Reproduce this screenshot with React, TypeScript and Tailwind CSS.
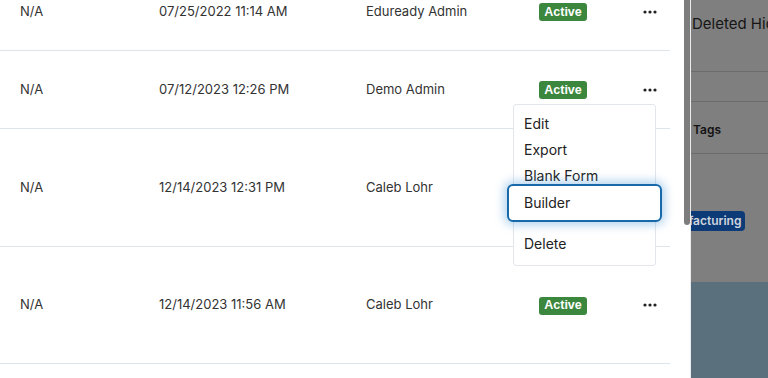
import type { ReactNode } from 'react';

interface Row {
  ref: string;
  date: string;
  owner: string;
  height: number;
}

const rows: Row[] = [
  { ref: 'N/A', date: '07/25/2022 11:14 AM', owner: 'Eduready Admin', height: 78 },
  { ref: 'N/A', date: '07/12/2023 12:26 PM', owner: 'Demo Admin', height: 78 },
  { ref: 'N/A', date: '12/14/2023 12:31 PM', owner: 'Caleb Lohr', height: 118 },
  { ref: 'N/A', date: '12/14/2023 11:56 AM', owner: 'Caleb Lohr', height: 117 },
];

const font = { fontFamily: 'Inter, "Noto Sans", sans-serif' };

function Dots() {
  return (
    <svg width="14" height="4" viewBox="0 0 14 4" className="text-[#222]">
      <circle cx="2" cy="2" r="1.6" fill="currentColor" />
      <circle cx="7" cy="2" r="1.6" fill="currentColor" />
      <circle cx="12" cy="2" r="1.6" fill="currentColor" />
    </svg>
  );
}

function MenuItem({ children }: { children: ReactNode }) {
  return <div className="flex h-[26px] items-center px-[10px] text-[14px] text-[#222]">{children}</div>;
}

function ActionsMenu() {
  return (
    <div className="absolute left-[-130px] top-[16px] z-10 w-[143px] rounded-[3px] border border-[#e3e6ea] bg-white pt-[6px] pb-[8px]">
      <MenuItem>Edit</MenuItem>
      <MenuItem>Export</MenuItem>
      <MenuItem>Blank Form</MenuItem>
      <div className="relative -mx-[7px] -mt-[5px] flex h-[38px] items-center rounded-[6px] border-2 border-[#1769aa] bg-white pl-[15px] text-[14px] text-[#222] shadow-[0_0_10px_3px_rgba(38,132,210,0.35)]">
        Builder
      </div>
      <div className="h-[9px]" />
      <MenuItem>Delete</MenuItem>
    </div>
  );
}

export default function App() {
  return (
    <div className="flex h-[378px] w-[768px] overflow-hidden bg-white" style={font}>
      <div className="w-[684px] shrink-0 overflow-hidden">
        <div className="-mt-[27px] w-[670px]">
          {rows.map((r, i) => (
            <div
              key={i}
              className="flex items-center border-b border-[#dde4ea] text-[13px] text-[#333]"
              style={{ height: r.height }}
            >
              <div className="w-[159px] pl-[20px]">{r.ref}</div>
              <div className="w-[207px]">{r.date}</div>
              <div className="w-[173px]">{r.owner}</div>
              <div className="w-[104px]">
                {i === 2 ? null : (
                  <span
                    className="inline-flex h-[18px] w-[48px] items-center justify-center rounded-[3px] bg-[#3b873e] text-[12.5px] font-bold text-white"
                    style={{ fontFamily: '"Liberation Sans", Arial, sans-serif' }}
                  >
                    Active
                  </span>
                )}
              </div>
              <div className="relative flex">
                <Dots />
                {i === 1 ? <ActionsMenu /> : null}
              </div>
            </div>
          ))}
        </div>
      </div>
      <div className="w-[6px] shrink-0">
        <div className="h-[225px] rounded-b-[3px] bg-[#7d7d7d]" />
      </div>
      <div className="w-px shrink-0 bg-[#e9ecef]" />
      <div className="flex min-w-0 flex-1 flex-col overflow-hidden bg-[#7f7f7f]">
        <div className="h-[72px] border-b border-[#6c6c6c] pl-[1px] pt-[13px] text-[15px] whitespace-nowrap text-[#161616]">
          Deleted Hidden
        </div>
        <div className="h-[30px] border-b border-[#6c6c6c]" />
        <div className="mt-[4px] flex h-[48px] items-center border-b border-[#6c6c6c] pl-[2px] text-[12px] font-semibold text-[#121212]">
          Tags
        </div>
        <div className="flex h-[128px] items-center">
          <span className="-ml-[39px] mt-[6px] rounded-[4px] bg-[#0c3b78] px-[4px] py-[1px] text-[12px] font-semibold whitespace-nowrap text-[#cfd5de]">
            Manufacturing
          </span>
        </div>
        <div className="flex-1 bg-[#5a707c]" />
      </div>
    </div>
  );
}
